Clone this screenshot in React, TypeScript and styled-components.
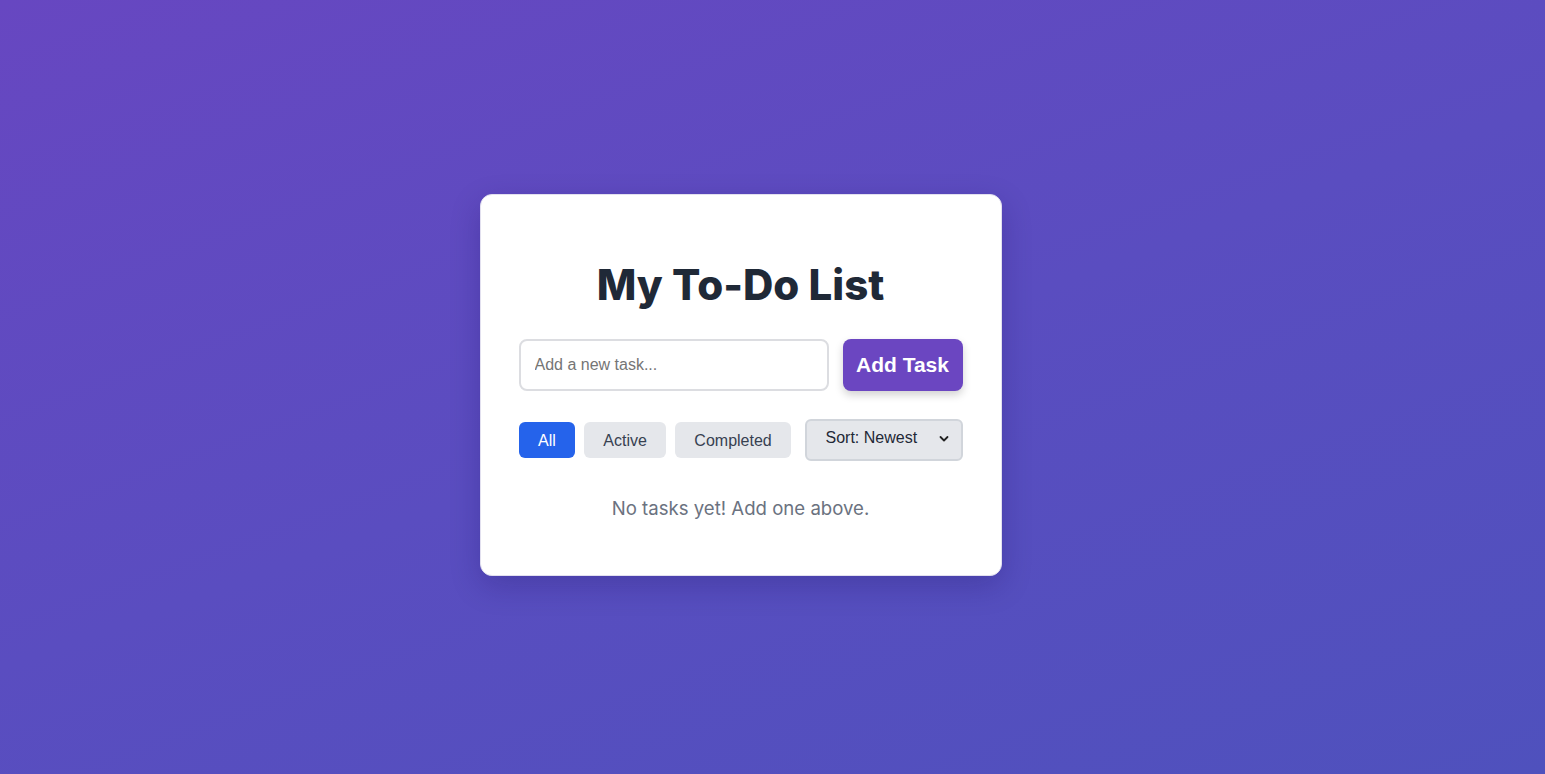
import React from "react";
import styled, { createGlobalStyle } from "styled-components";

const Global = createGlobalStyle`
  html, body { margin: 0; padding: 0; }
  body {
    font-family: "Liberation Sans", Arial, sans-serif;
    background: linear-gradient(160deg, #6747c1 0%, #5a4dc0 50%, #4f51bd 100%);
    min-height: 100vh;
  }
  * { box-sizing: border-box; }
`;

const Page = styled.div`
  min-height: 100vh;
  display: flex;
  align-items: center;
  justify-content: center;
  padding: 0 64px 5px 0;
`;

const Card = styled.div`
  width: 522px;
  background: #ffffff;
  border: 1px solid #e2e0ef;
  border-radius: 12px;
  padding: 38px;
  box-shadow: 0 10px 30px rgba(20, 10, 80, 0.22);
`;

const Title = styled.h1`
  margin: 26px 0 29px;
  text-align: center;
  font-family: Inter, "Noto Sans", sans-serif;
  font-weight: 800;
  font-size: 42px;
  color: #1f2937;
`;

const InputRow = styled.div`
  display: flex;
  gap: 14px;
`;

const TaskInput = styled.input`
  flex: 1;
  height: 52px;
  border: 2px solid #dcdde1;
  border-radius: 8px;
  padding: 0 14px;
  font-family: "Liberation Sans", Arial, sans-serif;
  font-size: 16px;
  color: #111;
  outline: none;
  &::placeholder { color: #757575; }
`;

const AddButton = styled.button`
  width: 120px;
  height: 52px;
  border: none;
  border-radius: 8px;
  background: #6b46c1;
  color: #fff;
  font-family: "Liberation Sans", Arial, sans-serif;
  font-weight: 700;
  font-size: 21px;
  padding: 0;
  box-shadow: 0 4px 8px rgba(0, 0, 0, 0.18);
  cursor: pointer;
`;

const Controls = styled.div`
  display: flex;
  align-items: center;
  justify-content: space-between;
  margin-top: 28px;
`;

const Filters = styled.div`
  display: flex;
  gap: 8.5px;
`;

const FilterButton = styled.button<{ $active?: boolean }>`
  height: 36px;
  padding: 3px 19.5px 0;
  border: none;
  border-radius: 6px;
  background: ${(p) => (p.$active ? "#2563eb" : "#e5e7eb")};
  color: ${(p) => (p.$active ? "#ffffff" : "#374151")};
  font-family: "Liberation Sans", Arial, sans-serif;
  font-size: 16px;
  cursor: pointer;
`;

const SelectBox = styled.div`
  position: relative;
  width: 158px;
  height: 42px;
`;

const Select = styled.select`
  appearance: none;
  width: 100%;
  height: 100%;
  border: 2px solid #d1d5db;
  border-radius: 6px;
  background: #e5e7eb;
  color: #1f2937;
  font-family: "Liberation Sans", Arial, sans-serif;
  font-size: 16px;
  padding: 0 0 4px 19px;
  outline: none;
`;

const Chevron = styled.svg`
  position: absolute;
  right: 14px;
  top: 16px;
  pointer-events: none;
`;

const Empty = styled.p`
  margin: 36px 0 18px;
  text-align: center;
  font-family: Inter, "Noto Sans", sans-serif;
  font-size: 18.6px;
  color: #6b7280;
`;

export default function App() {
  return (
    <>
      <Global />
      <Page>
        <Card>
          <Title>My To-Do List</Title>
          <InputRow>
            <TaskInput placeholder="Add a new task..." />
            <AddButton>Add Task</AddButton>
          </InputRow>
          <Controls>
            <Filters>
              <FilterButton $active>All</FilterButton>
              <FilterButton>Active</FilterButton>
              <FilterButton>Completed</FilterButton>
            </Filters>
            <SelectBox>
              <Select defaultValue="newest">
                <option value="newest">Sort: Newest</option>
                <option value="oldest">Sort: Oldest</option>
              </Select>
              <Chevron width="10" height="8" viewBox="0 0 10 8">
                <path d="M1.5 2 L5 5.5 L8.5 2" fill="none" stroke="#222" strokeWidth="1.8" strokeLinecap="round" strokeLinejoin="round" />
              </Chevron>
            </SelectBox>
          </Controls>
          <Empty>No tasks yet! Add one above.</Empty>
        </Card>
      </Page>
    </>
  );
}
